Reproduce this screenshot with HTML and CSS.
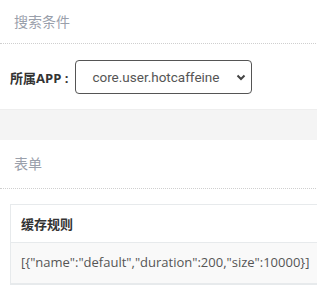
FILE: index.html
```html
<!DOCTYPE html>
<html>
<head>
<meta charset="utf-8">
<link rel="stylesheet" href="styles.css">
</head>
<body>
<div class="page">
  <section class="box">
    <div class="box-head"><h3 class="box-title">搜索条件</h3></div>
    <div class="box-body">
      <label class="field-label">所属APP :</label>
      <div class="select">
        <span class="select-text">core.user.hotcaffeine</span>
        <svg class="chev" width="10" height="7" viewBox="0 0 10 7"><path d="M1.5 1.5 L5 5 L8.5 1.5" fill="none" stroke="#444" stroke-width="2"/></svg>
      </div>
    </div>
  </section>
  <div class="band"></div>
  <section class="box">
    <div class="box-head box-head--tall"><h3 class="box-title">表单</h3></div>
    <div class="table-wrap">
      <table class="table">
        <thead><tr><th>缓存规则</th></tr></thead>
        <tbody><tr><td>[{"name":"default","duration":200,"size":10000}]</td></tr></tbody>
      </table>
    </div>
  </section>
</div>
</body>
</html>
```
FILE: styles.css
```css
html, body { margin: 0; padding: 0; background: #fff; overflow: hidden; }
body { font-family: "Open Sans", "Noto Sans CJK SC", sans-serif; color: #333; }
.page { width: 420px; }
.box-head { padding: 0 14px; height: 43px; display: flex; align-items: center; border-bottom: 1px dotted #cfcfcf; }
.box-head--tall { height: 48px; }
.box-title { margin: 0; font-size: 14px; font-weight: 400; color: #9aa0ab; line-height: 1; }
.box-body { display: flex; align-items: center; padding: 16px 10px 15px 10px; height: 34px; border-bottom: 1px solid #eee; }
.field-label { font-size: 13px; font-weight: 700; color: #333; margin-right: 7px; }
.select { box-sizing: border-box; width: 177px; height: 34px; border: 1px solid #555; border-radius: 4px; display: flex; align-items: center; padding: 0 5px 0 16px; justify-content: space-between; }
.select-text { font-family: Roboto, "Open Sans", sans-serif; font-size: 13.5px; color: #555; }
.chev { display: block; }
.band { height: 30px; background: #f4f4f4; }
.table-wrap { padding: 15px 10px; }
.table { border-collapse: collapse; width: 100%; font-size: 13px; }
.table th { text-align: left; font-weight: 700; color: #333; height: 36px; padding: 0 10px 1px; border: 1px solid #e7eaec; }
.table td { background: #f9f9f9; color: #555; height: 38px; padding: 0 10px 2px; border: 1px solid #e7eaec; border-bottom-width: 2px; }
```
